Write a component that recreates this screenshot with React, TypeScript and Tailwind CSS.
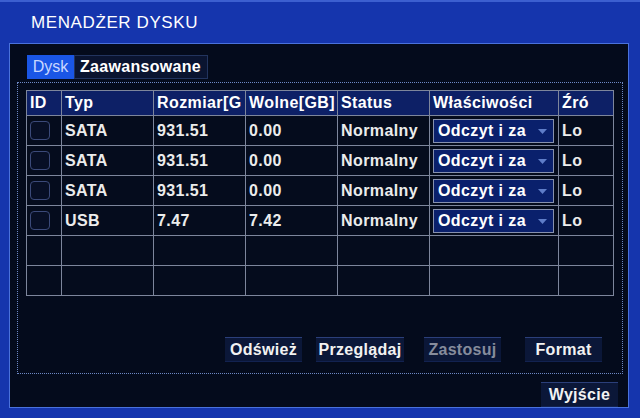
import React from "react";

const cols = "grid-cols-[35px_92px_92px_92px_92px_129px_55px]";

const rows = [
  { typ: "SATA", size: "931.51", free: "0.00" },
  { typ: "SATA", size: "931.51", free: "0.00" },
  { typ: "SATA", size: "931.51", free: "0.00" },
  { typ: "USB", size: "7.47", free: "7.42" },
];

function Cell({ children, className = "" }: { children?: React.ReactNode; className?: string }) {
  return (
    <div
      className={
        "border-r border-b border-[#7d869c] flex items-center pl-[3px] overflow-hidden whitespace-nowrap " +
        className
      }
    >
      {children}
    </div>
  );
}

function Btn({ children, w, dim }: { children: React.ReactNode; w: string; dim?: boolean }) {
  return (
    <div
      className={
        "h-[25px] flex items-center justify-center bg-[#0b1738] border-t border-[#2b3f7a] border-b border-b-[#122250] font-bold text-[16px] tracking-[0.3px] " +
        w +
        (dim ? " text-[#868c9c]" : " text-[#f2f2f2]")
      }
    >
      {children}
    </div>
  );
}

export default function App() {
  return (
    <div className="w-[640px] h-[418px] bg-[#1535ad] flex flex-col overflow-hidden font-['Liberation_Sans',Arial,sans-serif] text-[#ececec]">
      <div className="h-[43px] shrink-0 flex items-center pl-[31px] pt-[1px] border-t-2 border-[#3c5fd0] text-white text-[17px] tracking-[0.6px]">
        MENADŻER DYSKU
      </div>
      <div className="flex-1 ml-[9px] mr-[11px] mb-[10px] bg-[#040b1c] border border-[#4a72dc] flex flex-col">
        <div className="flex pl-[17px] pt-[11px] h-[38px]">
          <div className="w-[47px] h-[24px] bg-[#1a56e6] text-[#c8d6ff] text-[16px] flex items-center justify-center">
            Dysk
          </div>
          <div className="w-[134px] h-[24px] bg-[#0a1430] border border-[#22345e] text-white font-bold text-[16px] tracking-[0.3px] flex items-center pl-[5px]">
            Zaawansowane
          </div>
        </div>
        <div className="ml-[7px] w-[606px] h-[292px] border border-dotted border-[#6d88c4] flex flex-col">
          <div className="ml-[8px] mt-[7px] w-[588px] border-l border-t border-[#7d869c] font-bold text-[16px] tracking-[0.4px]">
            <div className={"grid h-[25px] bg-[#0d2066] text-white " + cols}>
              <Cell>ID</Cell>
              <Cell>Typ</Cell>
              <Cell>Rozmiar[G</Cell>
              <Cell>Wolne[GB]</Cell>
              <Cell>Status</Cell>
              <Cell>Właściwości</Cell>
              <Cell>Źró</Cell>
            </div>
            {rows.map((r, i) => (
              <div key={i} className={"grid h-[30px] bg-[#050c1d] " + cols}>
                <Cell>
                  <div className="w-[20px] h-[19px] rounded-[4px] border border-[#3b4a7a] bg-[#070f26]" />
                </Cell>
                <Cell>{r.typ}</Cell>
                <Cell>{r.size}</Cell>
                <Cell>{r.free}</Cell>
                <Cell>Normalny</Cell>
                <Cell className="pl-[3px]">
                  <div className="w-[121px] h-[24px] bg-[#0a206c] border border-[#8791ae] flex items-center pl-[4px] relative text-white">
                    Odczyt i za
                    <svg className="absolute right-[6px] top-[9px]" width="9" height="5" viewBox="0 0 9 5">
                      <path d="M0 0 L9 0 L4.5 5 Z" fill="#5f7dc9" />
                    </svg>
                  </div>
                </Cell>
                <Cell>Lo</Cell>
              </div>
            ))}
            {[0, 1].map((i) => (
              <div key={"e" + i} className={"grid h-[30px] bg-[#050c1d] " + cols}>
                <Cell />
                <Cell />
                <Cell />
                <Cell />
                <Cell />
                <Cell />
                <Cell />
              </div>
            ))}
          </div>
          <div className="flex mt-[41px] pl-[207px]">
            <Btn w="w-[77px]">Odśwież</Btn>
            <div className="w-[14px]" />
            <Btn w="w-[88px]">Przeglądaj</Btn>
            <div className="w-[20px]" />
            <Btn w="w-[77px]" dim>
              Zastosuj
            </Btn>
            <div className="w-[24px]" />
            <Btn w="w-[77px]">Format</Btn>
          </div>
        </div>
        <div className="flex justify-end pr-[10px] mt-[8px]">
          <Btn w="w-[77px]">Wyjście</Btn>
        </div>
      </div>
    </div>
  );
}
